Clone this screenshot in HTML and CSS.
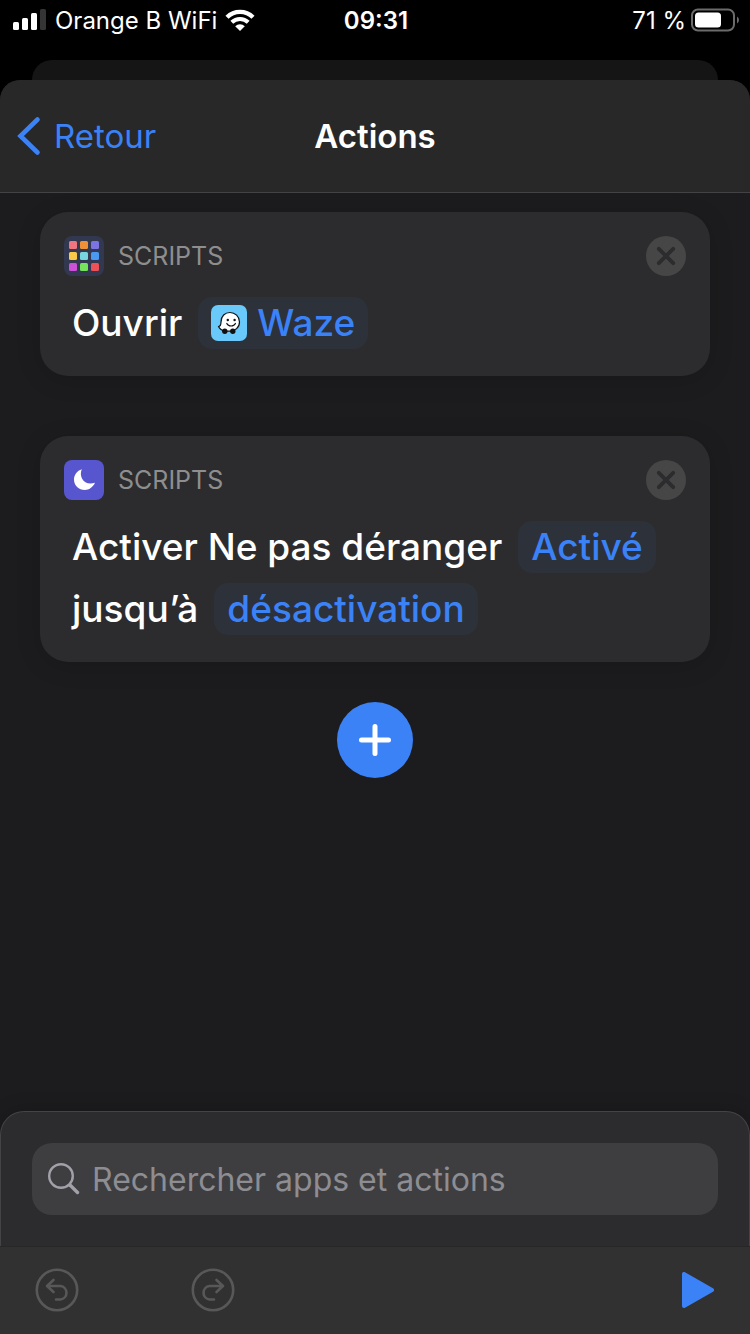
FILE: index.html
```html
<!DOCTYPE html>
<html lang="fr">
  <head>
    <meta charset="UTF-8" />
    <meta name="viewport" content="width=device-width, initial-scale=1.0" />
    <title>Actions</title>
    <link rel="stylesheet" href="styles.css">
  </head>

  <body>
    <div class="status">
      <div class="status-left">
        <svg width="34" height="22" viewBox="0 0 34 22">
          <rect x="0" y="13" width="6" height="8" rx="1.5" fill="#fff" />
          <rect x="9" y="9" width="6" height="12" rx="1.5" fill="#fff" />
          <rect x="18" y="4" width="6" height="17" rx="1.5" fill="#fff" />
          <rect x="27" y="0" width="6" height="21" rx="1.5" fill="#353535" />
        </svg>
        <span>Orange B WiFi</span>
        <svg width="30" height="22" viewBox="0 0 30 22">
          <path d="M2 8.2a18.6 18.6 0 0 1 26 0" fill="none" stroke="#fff" stroke-width="4.4" />
          <path d="M6.8 13.2a11.8 11.8 0 0 1 16.4 0" fill="none" stroke="#fff" stroke-width="4" />
          <path d="M10.2 17.2a7 7 0 0 1 9.6 0L15 22z" fill="#fff" />
        </svg>
      </div>
      <div class="time">09:31</div>
      <div class="status-right">
        <span>71 %</span>
        <svg width="48" height="24" viewBox="0 0 48 24">
          <rect x="1" y="1.5" width="42" height="21" rx="6" fill="none" stroke="#6b6b6b" stroke-width="2" />
          <rect x="4" y="4.5" width="26" height="15" rx="3.5" fill="#fff" />
          <path d="M46 8.5q2 1 2 3.5t-2 3.5z" fill="#6b6b6b" />
        </svg>
      </div>
    </div>
    <div class="behind"></div>

    <div class="sheet">
      <header class="nav">
        <a class="back" href="#">
          <svg width="24" height="40" viewBox="0 0 24 40">
            <path d="M20.5 3.5 3.5 20l17 16.5" fill="none" stroke="#3b82f7" stroke-width="4.6" stroke-linecap="round" stroke-linejoin="miter" />
          </svg>
          Retour
        </a>
        <h1>Actions</h1>
      </header>

      <main>
        <section class="card">
          <div class="card-head">
            <svg width="40" height="40" viewBox="0 0 40 40">
              <rect width="40" height="40" rx="8" fill="#323850" />
              <rect x="5" y="5" width="8" height="8" rx="1.5" fill="#ef7580" />
              <rect x="16" y="5" width="8" height="8" rx="1.5" fill="#f09137" />
              <rect x="27" y="5" width="8" height="8" rx="1.5" fill="#7c74e2" />
              <rect x="5" y="16" width="8" height="8" rx="1.5" fill="#f9c846" />
              <rect x="16" y="16" width="8" height="8" rx="1.5" fill="#76d5de" />
              <rect x="27" y="16" width="8" height="8" rx="1.5" fill="#4a98f2" />
              <rect x="5" y="27" width="8" height="8" rx="1.5" fill="#cc50d8" />
              <rect x="16" y="27" width="8" height="8" rx="1.5" fill="#76e35c" />
              <rect x="27" y="27" width="8" height="8" rx="1.5" fill="#ee5257" />
            </svg>
            <span>SCRIPTS</span>
            <button class="close" aria-label="Supprimer">
              <svg width="40" height="40" viewBox="0 0 40 40">
                <circle cx="20" cy="20" r="20" fill="#464646" />
                <path d="m12.8 12.8 14.400 14.400M27.200 12.800 12.800 27.200" stroke="#2c2c2e" stroke-width="3.800" stroke-linecap="round" />
              </svg>
            </button>
          </div>
          <div class="sentence">
            <span>Ouvrir</span>
            <button class="token">
              <svg width="36" height="36" viewBox="0 0 36 36">
                <rect width="36" height="36" rx="7" fill="#68c9fa" />
                <path d="M7.5 21.5c2.2-.2 2.5-1.8 2.5-4.5C10 11 14 7.500 19 7.500s9.500 4 9.500 9.500-4.500 9.200-9.500 9.200h-5c-3.200-.6-5.500-2.500-6.500-4.700z" fill="#fff" stroke="#111" stroke-width="1.2" stroke-linejoin="round" />
                <circle cx="13.8" cy="26.2" r="2.7" fill="#111" />
                <circle cx="21.8" cy="26.2" r="2.7" fill="#111" />
                <circle cx="16.8" cy="15" r="1.2" fill="#111" />
                <circle cx="23.6" cy="15" r="1.2" fill="#111" />
                <path d="M15.8 18.5c1.6 3.3 7 3.3 8.6 0" fill="none" stroke="#111" stroke-width="1.2" stroke-linecap="round" />
              </svg>
              Waze
            </button>
          </div>
        </section>

        <section class="card">
          <div class="card-head">
            <svg width="40" height="40" viewBox="0 0 40 40">
              <rect width="40" height="40" rx="8" fill="#5856ce" />
              <path d="M17.8 9.2C14.5 16.5 20 26.3 31 22.8 28.8 27.5 25 30 20.8 30 14.8 30 10 25.5 10 19.5c0-4.7 3-8.7 7.8-10.3z" fill="#fff" />
            </svg>
            <span>SCRIPTS</span>
            <button class="close" aria-label="Supprimer">
              <svg width="40" height="40" viewBox="0 0 40 40">
                <circle cx="20" cy="20" r="20" fill="#464646" />
                <path d="m12.8 12.8 14.400 14.400M27.200 12.800 12.800 27.200" stroke="#2c2c2e" stroke-width="3.800" stroke-linecap="round" />
              </svg>
            </button>
          </div>
          <div class="sentence">
            <span>Activer Ne pas déranger</span>
            <button class="token">Activé</button>
            <span>jusqu’à</span>
            <button class="token">désactivation</button>
          </div>
        </section>

        <button class="add" aria-label="Ajouter une action">
          <svg width="76" height="76" viewBox="0 0 76 76">
            <path d="M38 24.5v27M24.5 38h27" stroke="#fff" stroke-width="5" stroke-linecap="round" />
          </svg>
        </button>
      </main>

      <div class="dock">
        <label class="search">
          <svg width="32" height="32" viewBox="0 0 32 32">
            <circle cx="13" cy="13" r="11.8" fill="none" stroke="#a2a1aa" stroke-width="2.4" />
            <path d="m22 22 7.5 7.5" stroke="#a2a1aa" stroke-width="3.4" stroke-linecap="round" />
          </svg>
          <input type="text" placeholder="Rechercher apps et actions" aria-label="Rechercher apps et actions" />
        </label>
      </div>

      <footer class="toolbar">
        <button aria-label="Annuler">
          <svg width="44" height="44" viewBox="0 0 44 44" fill="none" stroke="#585858" stroke-width="2.6" stroke-linecap="round" stroke-linejoin="round">
            <circle cx="22" cy="22" r="20.2" />
            <path d="M18.5 12 12 18l6.5 6M12.5 18H25.5a6.8 6.8 0 0 1 0 13.5H21" />
          </svg>
        </button>
        <button class="redo" aria-label="Rétablir">
          <svg width="44" height="44" viewBox="0 0 44 44" fill="none" stroke="#585858" stroke-width="2.6" stroke-linecap="round" stroke-linejoin="round">
            <circle cx="22" cy="22" r="20.2" />
            <path d="M25.5 12 32 18l-6.5 6M31.5 18H18.5a6.8 6.8 0 0 0 0 13.5H23" />
          </svg>
        </button>
        <button class="play" aria-label="Exécuter">
          <svg width="32" height="36" viewBox="0 0 32 36">
            <path d="M2 2v32l28-16z" fill="#3b82f7" stroke="#3b82f7" stroke-width="4" stroke-linejoin="round" />
          </svg>
        </button>
      </footer>
    </div>
  </body>
</html>
```

FILE: styles.css
```css
* {
  margin: 0;
  padding: 0;
  box-sizing: border-box;
}

body {
  min-height: 100vh;
  display: flex;
  flex-direction: column;
  background-color: #000;
  color: #fff;
  font-family: Inter, "Liberation Sans", sans-serif;
}

svg {
  display: block;
  flex: none;
}

button {
  border: none;
  background: none;
  color: inherit;
  font: inherit;
  cursor: pointer;
}

/* barre d'état */
.status {
  height: 60px;
  padding: 0 11px 20px 13px;
  display: grid;
  grid-template-columns: 1fr auto 1fr;
  align-items: center;
  font-size: 24px;
}

.status-left,
.status-right {
  display: flex;
  align-items: center;
  gap: 8px;
}

.status-right {
  justify-content: flex-end;
  gap: 5px;
}

.time {
  font-weight: 600;
}

.behind {
  height: 20px;
  margin: 0 32px;
  border-radius: 20px 20px 0 0;
  background-color: #151515;
}

.sheet {
  flex: 1;
  display: flex;
  flex-direction: column;
  border-radius: 20px 20px 0 0;
  overflow: hidden;
  background-color: #1c1c1e;
}

.nav {
  height: 113px;
  padding: 0 17px;
  display: grid;
  grid-template-columns: 1fr auto 1fr;
  align-items: center;
  background-color: #282828;
  border-bottom: 1px solid #434345;
  font-size: 33px;
}

.back {
  display: flex;
  align-items: center;
  gap: 13px;
  color: #3b82f7;
  text-decoration: none;
}

.nav h1 {
  font-size: 33px;
  font-weight: 600;
}

main {
  flex: 1;
  padding: 19px 40px 40px;
}

.card {
  padding: 24px 24px 22px;
  margin-bottom: 60px;
  border-radius: 28px;
  background-color: #2c2c2e;
  box-shadow: 0 4px 24px rgba(0, 0, 0, 0.15);
}

.card + .card {
  margin-bottom: 40px;
}

.card-head {
  display: flex;
  align-items: center;
  gap: 14px;
  margin-bottom: 16px;
  color: #8e8e8f;
  font-size: 25px;
}

.close {
  margin-left: auto;
}

.sentence {
  padding-left: 8px;
  display: flex;
  flex-wrap: wrap;
  align-items: center;
  column-gap: 16px;
  font-size: 37px;
  font-weight: 500;
  line-height: 62px;
}

.token {
  height: 52px;
  padding: 0 13px;
  display: flex;
  align-items: center;
  gap: 10px;
  border-radius: 14px;
  background-color: #2d3139;
  color: #3b82f7;
  line-height: 52px;
}

.add {
  display: block;
  margin: 0 auto;
  border-radius: 50%;
  background-color: #3b82f7;
}

.dock {
  padding: 31px;
  border: 1px solid #444446;
  border-bottom: none;
  border-radius: 24px 24px 0 0;
  background-color: #2c2c2e;
  box-shadow: 0 0 20px rgba(0, 0, 0, 0.2);
}

.search {
  height: 72px;
  padding: 0 16px;
  display: flex;
  align-items: center;
  gap: 12px;
  border-radius: 20px;
  background-color: #3e3e40;
}

.search input {
  flex: 1;
  min-width: 0;
  border: none;
  outline: none;
  background: none;
  color: #fff;
  font: inherit;
  font-size: 32px;
}

.search input::placeholder {
  color: #8d8d92;
  opacity: 1;
}

.toolbar {
  height: 88px;
  padding: 0 36px 0 35px;
  display: flex;
  align-items: center;
  background-color: #313131;
  box-shadow: inset 0 1px #272728;
}

.redo {
  margin-left: 112px;
}

.play {
  margin-left: auto;
}
```
